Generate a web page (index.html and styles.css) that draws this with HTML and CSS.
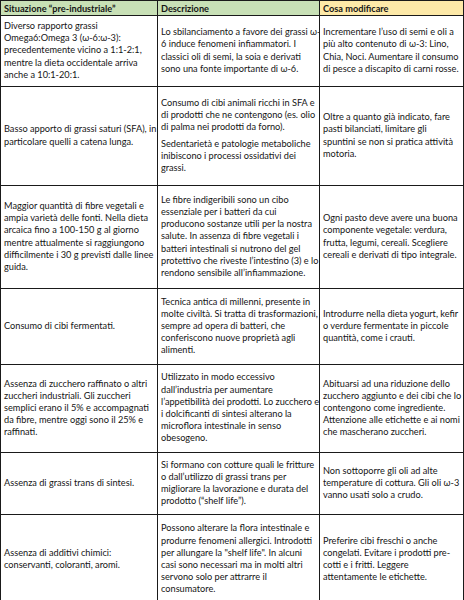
FILE: index.html
```html
<!DOCTYPE html>
<html lang="it">
<head>
<meta charset="utf-8">
<title>Situazione pre-industriale</title>
<link rel="stylesheet" href="styles.css">
</head>
<body>
<table class="grid">
  <colgroup>
    <col class="c1">
    <col class="c2">
    <col class="c3">
  </colgroup>
  <thead>
    <tr class="head">
      <th class="h-green">Situazione “pre-industriale”</th>
      <th class="h-green">Descrizione</th>
      <th class="h-yellow">Cosa modificare</th>
    </tr>
  </thead>
  <tbody>
    <tr class="r1">
      <td>Diverso rapporto grassi<br>Omega6:Omega 3 (ω-6:ω-3):<br>precedentemente vicino a 1:1-2:1,<br>mentre la dieta occidentale arriva<br>anche a 10:1-20:1.</td>
      <td>Lo sbilanciamento a favore dei grassi ω-<br>6 induce fenomeni infiammatori. I<br>classici oli di semi, la soia e derivati<br>sono una fonte importante di ω-6.</td>
      <td>Incrementare l’uso di semi e oli a<br>più alto contenuto di ω-3: Lino,<br>Chia, Noci. Aumentare il consumo<br>di pesce a discapito di carni rosse.</td>
    </tr>
    <tr class="r2">
      <td>Basso apporto di grassi saturi (SFA), in<br>particolare quelli a catena lunga.</td>
      <td><p class="para">Consumo di cibi animali ricchi in SFA e<br>di prodotti che ne contengono (es. olio<br>di palma nei prodotti da forno).</p><p class="para">Sedentarietà e patologie metaboliche<br>inibiscono i processi ossidativi dei<br>grassi.</p></td>
      <td>Oltre a quanto già indicato, fare<br>pasti bilanciati, limitare gli<br>spuntini se non si pratica attività<br>motoria.</td>
    </tr>
    <tr class="r3">
      <td>Maggior quantità di fibre vegetali e<br>ampia varietà delle fonti. Nella dieta<br>arcaica fino a 100-150 g al giorno<br>mentre attualmente si raggiungono<br>difficilmente i 30 g previsti dalle linee<br>guida.</td>
      <td>Le fibre indigeribili sono un cibo<br>essenziale per i batteri da cui<br>producono sostanze utili per la nostra<br>salute. In assenza di fibre vegetali i<br>batteri intestinali si nutrono del gel<br>protettivo che riveste l’intestino (3) e lo<br>rendono sensibile all’infiammazione.</td>
      <td>Ogni pasto deve avere una buona<br>componente vegetale: verdura,<br>frutta, legumi, cereali. Scegliere<br>cereali e derivati di tipo integrale.</td>
    </tr>
    <tr class="r4">
      <td>Consumo di cibi fermentati.</td>
      <td>Tecnica antica di millenni, presente in<br>molte civiltà. Si tratta di trasformazioni,<br>sempre ad opera di batteri, che<br>conferiscono nuove proprietà agli<br>alimenti.</td>
      <td>Introdurre nella dieta yogurt, kefir<br>o verdure fermentate in piccole<br>quantità, come i crauti.</td>
    </tr>
    <tr class="r5">
      <td>Assenza di zucchero raffinato o altri<br>zuccheri industriali. Gli zuccheri<br>semplici erano il 5% e accompagnati<br>da fibre, mentre oggi sono il 25% e<br>raffinati.</td>
      <td>Utilizzato in modo eccessivo<br>dall’industria per aumentare<br>l’appetibilità dei prodotti. Lo zucchero e<br>i dolcificanti di sintesi alterano la<br>microflora intestinale in senso<br>obesogeno.</td>
      <td>Abituarsi ad una riduzione dello<br>zucchero aggiunto e dei cibi che lo<br>contengono come ingrediente.<br>Attenzione alle etichette e ai nomi<br>che mascherano zuccheri.</td>
    </tr>
    <tr class="r6">
      <td>Assenza di grassi trans di sintesi.</td>
      <td>Si formano con cotture quali le fritture<br>o dall’utilizzo di grassi trans per<br>migliorare la lavorazione e durata del<br>prodotto (“shelf life”).</td>
      <td>Non sottoporre gli oli ad alte<br>temperature di cottura. Gli oli ω-3<br>vanno usati solo a crudo.</td>
    </tr>
    <tr class="r7">
      <td>Assenza di additivi chimici:<br>conservanti, coloranti, aromi.</td>
      <td>Possono alterare la flora intestinale e<br>produrre fenomeni allergici. Introdotti<br>per allungare la "shelf life". In alcuni<br>casi sono necessari ma in molti altri<br>servono solo per attrarre il<br>consumatore.</td>
      <td>Preferire cibi freschi o anche<br>congelati. Evitare i prodotti pre-<br>cotti e i fritti. Leggere<br>attentamente le etichette.</td>
    </tr>
  </tbody>
</table>
</body>
</html>
```

FILE: styles.css
```css
html, body {
  margin: 0;
  padding: 0;
  background: #ffffff;
}

body {
  font-family: Lato, "Open Sans", sans-serif;
  font-size: 9.2px;
  line-height: 12.2px;
  color: #151515;
  overflow: hidden;
}

.grid {
  border-collapse: collapse;
  table-layout: fixed;
  width: 463px;
  margin: 0;
}

.c1 { width: 157px; }
.c2 { width: 162px; }
.c3 { width: 144px; }

.grid th,
.grid td {
  border: 1.5px solid #1a1a1a;
  padding: 4px 1px 5px 3px;
  vertical-align: middle;
  text-align: left;
  white-space: nowrap;
  overflow: hidden;
}

.grid th {
  font-weight: 700;
  padding: 0 2px 0 3px;
  height: 14px;
  line-height: 13px;
}

.h-green { background: #c8e0b6; }
.h-yellow { background: #fde9a8; }

.para { margin: 0; }
.para + .para { margin-top: 4px; }

.r1 td { height: 60px; }
.r2 td { height: 89px; }
.r3 td { height: 93px; }
.r4 td { height: 66px; }
.r5 td { height: 78px; }
.r6 td { height: 52px; }
.r7 td { height: 80px; padding-top: 4px; padding-bottom: 2px; }
```
